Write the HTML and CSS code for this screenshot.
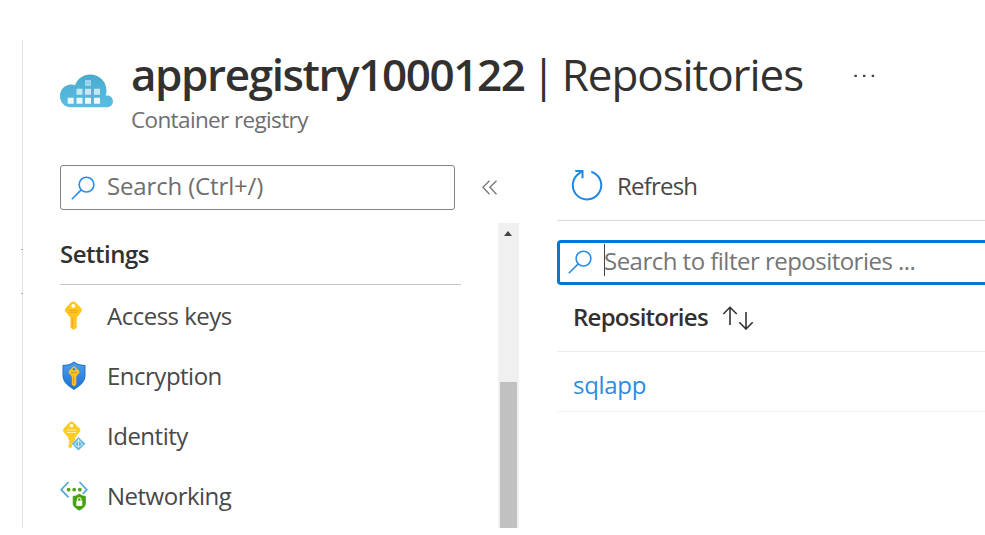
FILE: index.html
```
<!DOCTYPE html>
<html lang="en">
<head>
<meta charset="utf-8">
<title>appregistry1000122 | Repositories</title>
<link rel="stylesheet" href="styles.css">
</head>
<body>
<div class="blade">
  <i class="tick tick-upper"></i><i class="tick tick-lower"></i>
  <header class="header">
    <svg class="registry-icon" width="53" height="34" viewBox="0 0 53 34">
      <defs><linearGradient id="cloud" x1="0" y1="0" x2="0" y2="1"><stop offset="0" stop-color="#48abce"/><stop offset="1" stop-color="#59bde2"/></linearGradient></defs>
      <path fill="url(#cloud)" d="M11 33.3C4.500 33.300 0 28.500 0 22.300 0 15.500 5 10.500 11 10.500q2.200 0 4 .8C17.500 4.500 23 .4 30 .4c9.500 0 16.500 7 16.500 16.200 0 1.600-.3 3.400-.8 5 4-1 7.200 1.700 7.200 5.600 0 3.600-2.600 6.100-6.400 6.100z"/>
      <path fill="#b5e0f1" d="M25 6h6v6h-6z" opacity=".75"/>
      <path fill="#c6e8f4" d="M16.500 14.700h6v6h-6zM25 14.700h6v6h-6zM34 14.700h6v6h-6z"/>
      <path fill="#edf8fc" d="M7.700 23.700h6v6h-6zM16.500 23.700h6v6h-6zM25 23.700h6v6h-6zM34 23.700h6v6h-6z"/>
    </svg>
    <div class="heading">
      <h1 class="title"><span class="t-name">appregistry1000122</span><span class="t-bar">|</span><span class="t-page">Repositories</span></h1>
      <p class="subtitle">Container registry</p>
    </div>
    <svg class="more" width="22" height="4" viewBox="0 0 22 4"><path fill="#444" d="M.4.700h2.400v2.400H.4zM9 .700h2.400v2.400H9zM17.700.700h2.400v2.400h-2.400z"/></svg>
  </header>
  <div class="content">
    <aside class="side">
      <div class="side-top">
        <div class="search">
          <svg width="24" height="24" viewBox="0 0 24 24" fill="none" stroke="#2b8de6" stroke-width="1.600"><circle cx="15.500" cy="8.600" r="7.400"/><path d="M10.200 13.900.8 23.300"/></svg>
          <span>Search (Ctrl+/)</span>
        </div>
        <svg class="collapse" width="16" height="15" viewBox="0 0 16 15" fill="none" stroke="#777" stroke-width="1.300"><path d="M7.500.7.900 7.300l6.600 6.900M14.500.7 7.900 7.300l6.600 6.900"/></svg>
      </div>
      <div class="menu">
        <nav class="nav">
          <h2 class="group">Settings</h2>
          <a class="item"><svg width="28" height="30" viewBox="0 0 28 30"><path fill="#ffc61e" d="M13.300.5q1.500 0 2.700 1.200l5.200 5.600q1.400 1.500.2 3.300l-3.200 4.500-1.300 1.200v3l-.6 1.500.6 1.500-.6 1.500.6 1.500v1.300l-3.300 2.500-3.200-2.500V16.300L8.800 14.800 5.300 10.600Q4 9 5.400 7.300l5.200-5.600Q11.800.5 13.300.5z"/><circle cx="13.300" cy="4.900" r="1.900" fill="#fff"/><path stroke="#eda51a" stroke-width="1" d="M9 9.500h8.500M9 11.300h8.500"/><path stroke="#f3a81a" stroke-width="1.100" d="M12.300 16.500v10"/></svg><span>Access keys</span></a>
          <a class="item"><svg width="28" height="30" viewBox="0 0 28 30"><defs><linearGradient id="shield" x1="0" y1="0" x2="0" y2="1"><stop offset="0" stop-color="#509cec"/><stop offset="1" stop-color="#1873d2"/></linearGradient></defs><path fill="#2478cf" d="M14 .5c3.500 2.800 7.500 3.300 11.500 3.500v10.500c0 6.500-5.500 10.700-11.500 14.600C8 25.200 2.500 21 2.500 14.500V4C6.500 3.800 10.500 3.300 14 .5z"/><path fill="url(#shield)" d="M14 2.100c3.200 2.200 6.800 2.900 10.300 3.100v9.300c0 5.500-4.800 9.500-10.300 13.100C8.500 24 3.700 20 3.700 14.500V5.200C7.200 5 10.800 4.300 14 2.100z"/><path fill="#fbc026" d="m14 5.300 1.300.6 3.900 4q.7 1 0 2l-2.900 3.600v8L14 25.400l-2.200-1.900v-8l-2.900-3.600q-.7-1 0-2l3.800-4z"/><circle cx="14" cy="8.300" r="1.300" fill="#388be0"/><path stroke="#dd980f" d="M11 11.600h6M13.500 16v7"/></svg><span>Encryption</span></a>
          <a class="item"><svg width="28" height="30" viewBox="0 0 28 30"><path fill="#fdcc24" d="M11.500.5q1.200 0 2.200 1l6.200 6.300q1.200 1.500.1 3l-4.800 5.500v5.400L12 24.500v1.600l-2 1.300-1.600-2V24l1.500-1.500L8.400 21l1.300-1.500-1.500-1.600v-1.500L3.500 11q-1.200-1.600 0-3.200l5.800-6.200Q10.300.5 11.500.5z"/><circle cx="11.500" cy="4.700" r="1.800" fill="#fff"/><path stroke="#fff0a8" stroke-width="1.200" d="M7 9h9.500M7 11.500h9.500"/><path fill="#68b5da" stroke="#fff" stroke-width=".4" d="m18.500 15.900 7 6.800-7 7-7-7z"/><path fill="none" stroke="#d8f2fb" stroke-width=".9" d="M18.500 18v9M18.500 18.500l-4 5 4 2.500 4-2.500z"/></svg><span>Identity</span></a>
          <a class="item"><svg width="28" height="30" viewBox="0 0 28 30"><path fill="none" stroke="#55a9d8" stroke-width="1.800" d="M8.500 1 1.200 8.700l7.300 7.700M19.500 1l7.300 7.700-4 4.300"/><g fill="#55a31a"><circle cx="8.600" cy="8.700" r="1.900"/><circle cx="14.200" cy="8.700" r="1.900"/><circle cx="19.800" cy="8.700" r="1.900"/></g><path fill="#48a010" stroke="#fff" stroke-width=".4" d="M19.300 12.500q3 2.300 6.700 2.400v7.200c0 3.800-3.200 5.700-6.700 7.700-3.500-2-6.700-3.900-6.700-7.700v-7.200q3.700-.1 6.700-2.400z"/><rect x="16.300" y="19.700" width="6" height="5.200" fill="#f4fff0"/><path fill="none" stroke="#f4fff0" stroke-width="1.100" d="M17.500 20v-1.600q0-1.700 1.800-1.700t1.800 1.700V20"/></svg><span>Networking</span></a>
        </nav>
        <div class="scroll"><i class="arrow"></i><i class="thumb"></i></div>
      </div>
    </aside>
    <main class="main">
      <div class="toolbar">
        <svg width="32" height="32" viewBox="0 0 32 32" fill="none" stroke="#1b87e6" stroke-width="2"><path d="M20.300 2.700a14.200 14.200 0 1 1-11.800 1.500L11 2"/><path d="M4.300 2h7.200v7.200"/></svg>
        <span>Refresh</span>
      </div>
      <div class="filter">
        <svg width="24" height="24" viewBox="0 0 24 24" fill="none" stroke="#2b8de6" stroke-width="1.600"><circle cx="15.500" cy="8.600" r="7.400"/><path d="M10.200 13.900.8 23.300"/></svg>
        <i class="caret"></i>
        <span>Search to filter repositories ...</span>
      </div>
      <div class="thead"><span>Repositories</span>
        <svg width="32" height="24" viewBox="0 0 32 24" fill="none" stroke="#333" stroke-width="1.600"><path d="M8 19V1.500M1.300 8 8 1.300 14.700 8M24 6v17M17.300 16.300 24 23l6.700-6.700"/></svg>
      </div>
      <div class="row"><a>sqlapp</a></div>
    </main>
  </div>
</div>
</body>
</html>
```
FILE: styles.css
```
* { box-sizing: border-box; }
body { margin: 0; width: 985px; height: 535px; overflow: hidden; background: #fff; font: 24px "Open Sans", "Noto Sans", sans-serif; letter-spacing: -.5px; color: #484848; }
svg { display: block; flex: none; }
h1, h2, p { margin: 0; }
span, a { white-space: nowrap; }

.blade { position: relative; height: 488px; margin: 40px 0 0 22px; padding-left: 37px; border-left: 1px solid #e2e2e2; }
.tick { position: absolute; left: -2px; width: 2px; height: 1px; background: #aaa; }
.tick-upper { top: 209px; }
.tick-lower { top: 253px; }

.header { display: flex; height: 125px; padding-top: 4px; }
.registry-icon { margin-top: 30px; }
.heading { margin-left: 18px; }
.title { display: flex; height: 60px; font-size: 44px; line-height: 61px; font-weight: 400; color: #323130; }
.t-name { font-weight: 600; letter-spacing: -1.400px; }
.t-bar { margin-left: 7px; letter-spacing: 0; }
.t-page { margin-left: 6px; letter-spacing: -1.080px; }
.subtitle { margin-top: 2px; font-size: 22.500px; line-height: 28px; letter-spacing: -.63px; color: #6e6e6e; }
.more { margin: 30px 0 0 51px; }

.content { display: flex; }
.side { width: 459px; }
.side-top { display: flex; align-items: center; height: 45px; }
.search { display: flex; align-items: center; width: 395px; height: 45px; padding-left: 11px; border: 1px solid #858585; border-radius: 3px; color: #6e6e6e; }
.search span { margin: -3px 0 0 11px; line-height: 40px; letter-spacing: -.15px; }
.search svg { margin-left: -1px; margin-right: 1px; }
.collapse { margin-left: 27px; }
.menu { display: flex; justify-content: space-between; height: 305px; margin-top: 13px; }
.nav { width: 401px; }
.group { height: 62px; border-bottom: 1px solid #c4c4c4; font-size: 24px; line-height: 61px; font-weight: 600; color: #323130; }
.item { display: flex; align-items: center; height: 60px; }
.item span { margin-left: 19px; line-height: 60px; padding-top: 2px; }
.item svg { margin-top: 2px; }
.scroll { width: 21px; padding-top: 8px; background: #f0f0f0; }
.arrow { display: block; width: 0; margin-left: 6px; border: 4.500px solid transparent; border-top-width: 0; border-bottom: 5px solid #444; }
.thumb { display: block; width: 17px; height: 146px; margin: 146px 0 0 2px; background: #c1c1c1; }

.main { width: 428px; margin-left: 38px; }
.toolbar { display: flex; height: 56px; border-bottom: 1px solid #d8d8d8; padding-left: 14px; }
.toolbar svg { margin-top: 4px; }
.toolbar span { margin-left: 14px; line-height: 42px; letter-spacing: -.8px; }
.filter { position: relative; display: flex; height: 45px; margin-top: 19px; padding-left: 8px; border: 3px solid #0078d4; border-right: 0; border-radius: 4px 0 0 4px; color: #757575; }
.filter svg { margin-top: 7px; }
.filter span { margin-left: 12px; line-height: 36px; letter-spacing: -.52px; }
.caret { position: absolute; left: 44px; top: 1px; width: 1px; height: 32px; background: #444; }
.thead { display: flex; height: 67px; padding-left: 16px; border-bottom: 1px solid #ebebeb; font-weight: 600; color: #323130; }
.thead span { line-height: 63px; letter-spacing: -.75px; }
.thead svg { margin: 21px 0 0 14px; }
.row { height: 60px; padding-left: 16px; border-bottom: 1px solid #f3f3f3; line-height: 65px; letter-spacing: -.3px; color: #2b8de0; }
```
